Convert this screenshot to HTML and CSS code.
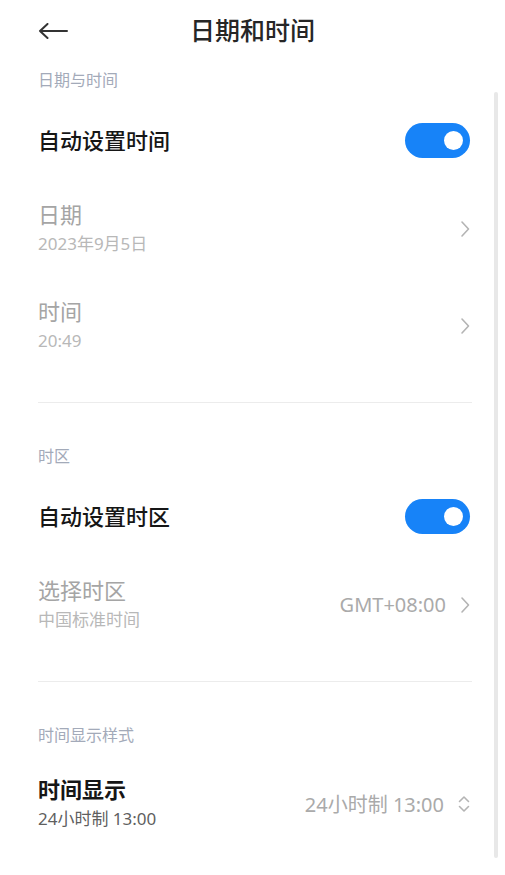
FILE: index.html
```html
<!DOCTYPE html>
<html lang="zh-CN">
<head>
<meta charset="utf-8">
<title>日期和时间</title>
<link rel="stylesheet" href="styles.css">
</head>
<body>
<div class="screen">
  <header class="topbar">
    <svg class="back" width="30" height="16" viewBox="0 0 30 16"><path d="M2 8 H29 M9.5 1 L2 8 L9.5 15" fill="none" stroke="#333" stroke-width="2" stroke-linecap="round" stroke-linejoin="round"/></svg>
    <h1 class="title-main">日期和时间</h1>
    <span></span>
  </header>

  <main class="list">
    <section class="group">
      <div class="group-label">日期与时间</div>
      <div class="row row-single">
        <span class="title strong">自动设置时间</span>
        <span class="switch"><span class="knob"></span></span>
      </div>
      <div class="row">
        <div class="text"><div class="title muted">日期</div><div class="sub">2023年9月5日</div></div>
        <svg class="chev" width="10" height="18" viewBox="0 0 10 18"><path d="M2 2 L8.5 9 L2 16" fill="none" stroke="#b4b4b4" stroke-width="1.6" stroke-linecap="round" stroke-linejoin="round"/></svg>
      </div>
      <div class="row">
        <div class="text"><div class="title muted">时间</div><div class="sub">20:49</div></div>
        <svg class="chev" width="10" height="18" viewBox="0 0 10 18"><path d="M2 2 L8.5 9 L2 16" fill="none" stroke="#b4b4b4" stroke-width="1.6" stroke-linecap="round" stroke-linejoin="round"/></svg>
      </div>
    </section>

    <div class="divider"></div>

    <section class="group">
      <div class="group-label">时区</div>
      <div class="row row-single">
        <span class="title strong">自动设置时区</span>
        <span class="switch"><span class="knob"></span></span>
      </div>
      <div class="row">
        <div class="text"><div class="title muted">选择时区</div><div class="sub">中国标准时间</div></div>
        <div class="end">
          <span class="value">GMT+08:00</span>
          <svg class="chev" width="10" height="18" viewBox="0 0 10 18"><path d="M2 2 L8.5 9 L2 16" fill="none" stroke="#b4b4b4" stroke-width="1.6" stroke-linecap="round" stroke-linejoin="round"/></svg>
        </div>
      </div>
    </section>

    <div class="divider"></div>

    <section class="group">
      <div class="group-label">时间显示样式</div>
      <div class="row">
        <div class="text"><div class="title strong bold">时间显示</div><div class="sub dark">24小时制 13:00</div></div>
        <div class="end">
          <span class="value">24小时制 13:00</span>
          <svg class="updown" width="12" height="18" viewBox="0 0 12 18"><path d="M1.5 6.5 L6 2 L10.5 6.5 M1.5 11.5 L6 16 L10.5 11.5" fill="none" stroke="#b4b4b4" stroke-width="1.6" stroke-linecap="round" stroke-linejoin="round"/></svg>
        </div>
      </div>
    </section>
  </main>

  <div class="scrollbar"></div>
</div>
</body>
</html>
```

FILE: styles.css
```css
* { box-sizing: border-box; }

html, body {
  margin: 0;
  padding: 0;
  background: #ffffff;
}

body {
  font-family: "Noto Sans", "Noto Sans CJK SC", sans-serif;
  color: #1a1a1a;
}

.screen {
  position: relative;
  width: 505px;
  height: 875px;
  overflow: hidden;
}

.topbar {
  height: 62px;
  display: grid;
  grid-template-columns: 1fr auto 1fr;
  align-items: center;
  padding: 0 38px;
}

.back {
  display: block;
}

.title-main {
  margin: 0 0 4px;
  font-family: "Noto Sans CJK SC", sans-serif;
  font-size: 25px;
  font-weight: 500;
  color: #262626;
  line-height: 30px;
}

.list {
  display: flex;
  flex-direction: column;
}

.group {
  display: flex;
  flex-direction: column;
  padding: 0 35px 0 38px;
}

.group-label {
  height: 38px;
  line-height: 34px;
  padding-bottom: 4px;
  font-family: "Noto Sans CJK SC", sans-serif;
  font-size: 16px;
  color: #a3aab9;
}

.row {
  height: 97px;
  display: flex;
  align-items: center;
  justify-content: space-between;
}

.row-single {
  height: 80px;
}

.text {
  display: flex;
  flex-direction: column;
}

.title {
  font-size: 22px;
  line-height: 30px;
}

.row-single .title {
  line-height: 30px;
}

.text .sub {
  line-height: 30px;
}

.strong {
  color: #161616;
  font-weight: 500;
}

.bold {
  font-weight: 600;
}

.muted {
  color: #a5a5a5;
}

.sub {
  font-size: 17px;
  color: #b8b8b8;
}

.sub.dark {
  color: #5f5f5f;
}

.end {
  display: flex;
  align-items: center;
  gap: 14px;
}

.value {
  font-size: 20px;
  color: #aaaaaa;
}

.chev, .updown {
  display: block;
}

.switch {
  position: relative;
  width: 65px;
  height: 35px;
  border-radius: 18px;
  background: #1783f8;
}

.knob {
  position: absolute;
  right: 7px;
  top: 8px;
  width: 19px;
  height: 19px;
  border-radius: 50%;
  background: #ffffff;
}

.divider {
  height: 1px;
  background: #ececec;
  margin: 28px 33px 35px 38px;
}

.scrollbar {
  position: absolute;
  left: 494px;
  top: 92px;
  width: 4px;
  height: 766px;
  border-radius: 2px;
  background: #e8e8e8;
}
```
